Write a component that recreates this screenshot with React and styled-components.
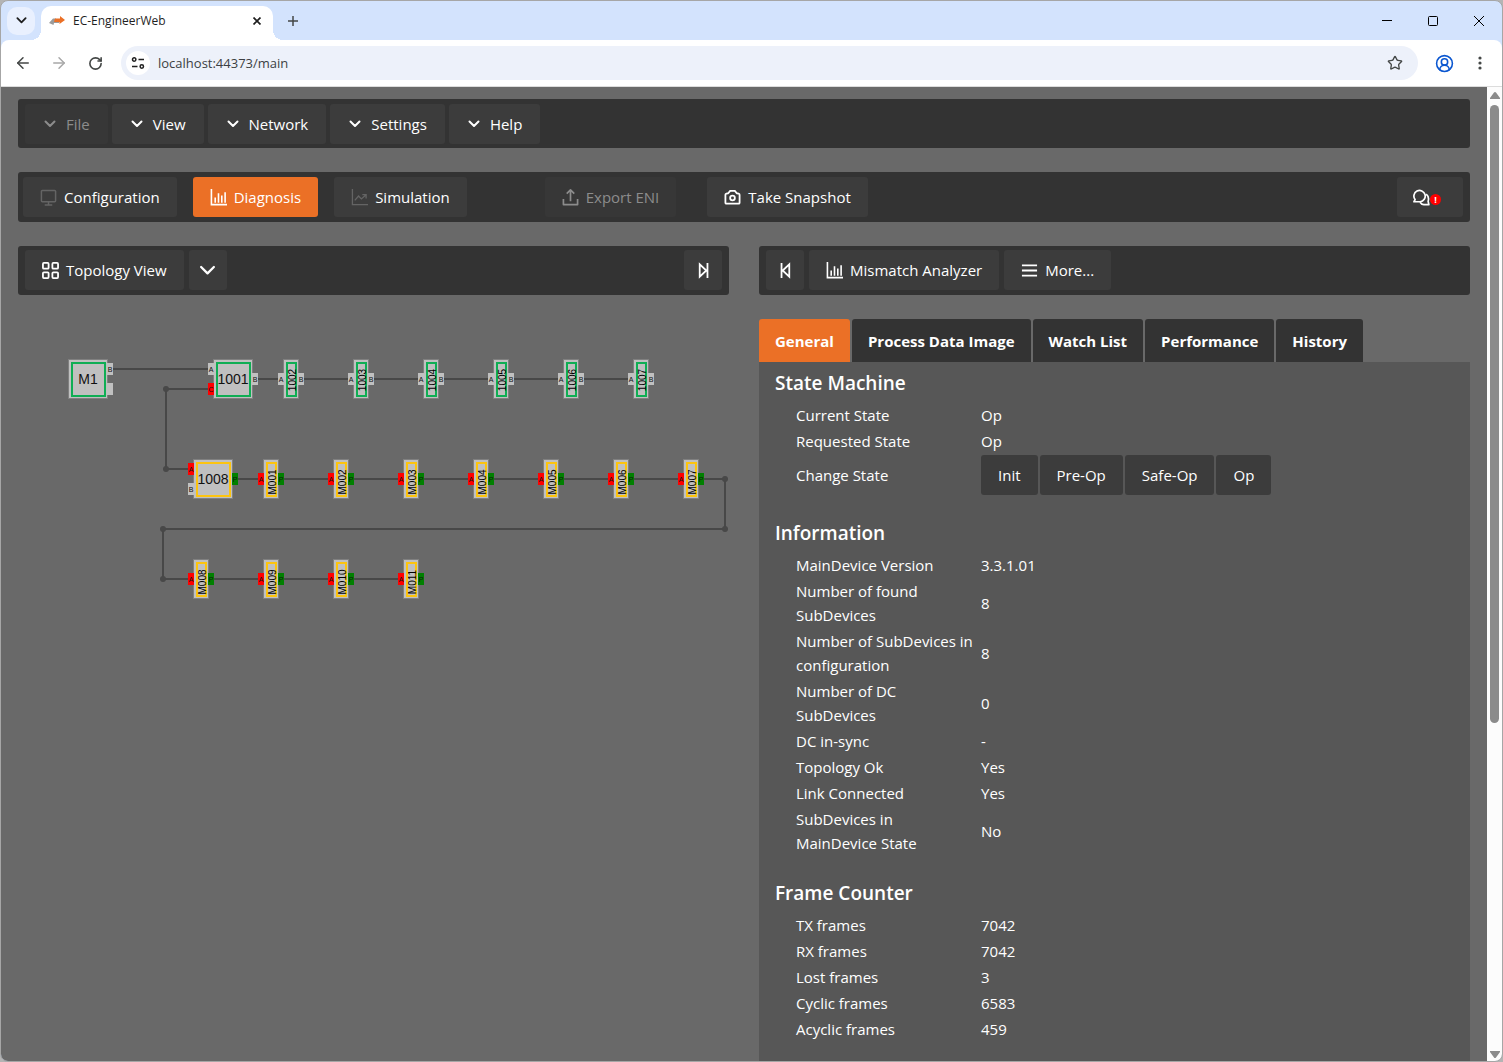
import React from "react";
import styled, { createGlobalStyle } from "styled-components";
import { ArrowLeft, ArrowRight, RotateCw, Star, CircleUserRound } from "lucide-react";

const GlobalStyle = createGlobalStyle`
  * {
    box-sizing: border-box;
  }
  body {
    margin: 0;
    background-color: #b4b4b4;
    font-family: "Open Sans", "Noto Sans", sans-serif;
  }
  button, input {
    font-family: inherit;
  }
`;

const Window = styled.div`
  height: 100vh;
  display: flex;
  flex-direction: column;
  border: 1px solid #a6a6a6;
  border-radius: 8px;
  overflow: hidden;
  background-color: #d3e3fd;
`;

/* browser frame */

const TitleBar = styled.div`
  height: 39px;
  flex-shrink: 0;
  display: flex;
  align-items: center;
  padding-left: 6px;
`;

const TabSearch = styled.button`
  width: 28px;
  height: 28px;
  display: flex;
  align-items: center;
  justify-content: center;
  padding: 0;
  border: none;
  border-radius: 10px;
  background-color: #e9f0fe;
  color: #1f1f1f;
`;

const BrowserTab = styled.div`
  position: relative;
  width: 232px;
  height: 34px;
  align-self: flex-end;
  display: flex;
  align-items: center;
  margin-left: 6px;
  padding: 0 10px 4px 8px;
  border-radius: 10px 10px 0 0;
  background-color: #fff;
  &::before, &::after {
    content: "";
    position: absolute;
    bottom: 0;
    width: 10px;
    height: 10px;
  }
  &::before {
    left: -10px;
    background: radial-gradient(circle at 0 0, transparent 10px, #fff 10px);
  }
  &::after {
    right: -10px;
    background: radial-gradient(circle at 100% 0, transparent 10px, #fff 10px);
  }
`;

const TabTitle = styled.span`
  flex: 1;
  margin-left: 8px;
  font-size: 12px;
  line-height: 16px;
  white-space: nowrap;
  color: #1f1f1f;
`;

const PlainButton = styled.button`
  width: ${(props) => props.$size}px;
  height: ${(props) => props.$size}px;
  display: flex;
  align-items: center;
  justify-content: center;
  flex-shrink: 0;
  padding: 0;
  border: none;
  background: none;
  color: ${(props) => props.$color || "#1f1f1f"};
`;

const Spacer = styled.div`
  flex: 1;
`;

const NewTab = styled.div`
  margin-left: 9px;
`;

const WindowControls = styled.div`
  display: flex;
  gap: 24px;
  padding-right: 12px;
`;

const AddressBar = styled.div`
  height: 47px;
  flex-shrink: 0;
  display: flex;
  align-items: center;
  padding: 0 10px;
  border-radius: 8px 8px 0 0;
  border-bottom: 1px solid #dcdcdc;
  background-color: #fff;
`;

const NavButtons = styled.div`
  display: flex;
  gap: 12px;
`;

const Omnibox = styled.div`
  flex: 1;
  height: 34px;
  display: flex;
  align-items: center;
  margin: 0 14px;
  padding: 0 12px 0 5px;
  border-radius: 17px;
  background-color: #edf1fa;
`;

const SiteInfo = styled.button`
  width: 24px;
  height: 24px;
  display: flex;
  align-items: center;
  justify-content: center;
  padding: 0;
  border: none;
  border-radius: 12px;
  background-color: #fff;
`;

const Url = styled.input`
  flex: 1;
  margin-left: 8px;
  padding: 0;
  border: none;
  outline: none;
  background: none;
  font-size: 13px;
  line-height: 20px;
  color: #3c3f43;
`;

const BrowserActions = styled.div`
  display: flex;
  gap: 12px;
`;

const Viewport = styled.div`
  flex: 1;
  min-height: 0;
  display: flex;
  background-color: #696969;
`;

const Scrollbar = styled.div`
  width: 15px;
  display: flex;
  flex-direction: column;
  align-items: center;
  gap: 6px;
  padding: 5px 0 3px;
  background-color: #fcfcfc;
`;

const Track = styled.div`
  flex: 1;
`;

const Thumb = styled.div`
  width: 9px;
  height: 64%;
  border-radius: 5px;
  background-color: #8b8b8b;
`;

/* application */

const Page = styled.main`
  flex: 1;
  min-width: 0;
  display: flex;
  flex-direction: column;
  gap: 24px;
  padding: 12px 17px 0;
  overflow: hidden;
  color: #fff;
`;

const Bar = styled.div`
  display: flex;
  align-items: center;
  gap: 4px;
  padding: 5px 7px 4px;
  border-radius: 3px;
  background-color: #333;
`;

const ModeBar = styled(Bar)`
  gap: 16px;
  padding: 5px 7px 5px 5px;
`;

const ViewBar = styled(Bar)`
  gap: 5px;
  padding: 4px 7px 5px;
`;

const Button = styled.button`
  height: 40px;
  display: flex;
  align-items: center;
  justify-content: center;
  gap: 7px;
  flex-shrink: 0;
  padding: 0 17px;
  border: none;
  border-radius: 3px;
  background-color: ${(props) => (props.$active ? "#eb7026" : "#3c3c3c")};
  color: #fff;
  font-size: 15px;
  line-height: 24px;
  white-space: nowrap;
  &:disabled {
    background-color: #373737;
    color: #8c8c8c;
  }
`;

const MenuButton = styled(Button)`
  gap: 10px;
  padding: 0 18px 0 19px;
`;

const IconButton = styled(Button)`
  width: 38px;
  padding: 0;
`;

const ExportGroup = styled.div`
  display: flex;
  gap: 31px;
  margin-left: 62px;
`;

const MessageButton = styled(Button)`
  width: 66px;
  gap: 0;
  padding: 0 6px 0 0;
`;

const Badge = styled.span`
  width: 11px;
  height: 11px;
  margin-top: 4px;
  border-radius: 6px;
  background-color: #f00;
  font-size: 9px;
  font-weight: 700;
  line-height: 11px;
  text-align: center;
`;

const Columns = styled.div`
  flex: 1;
  min-height: 0;
  display: grid;
  grid-template-columns: 1fr 1fr;
  gap: 30px;
`;

const Column = styled.section`
  min-width: 0;
  display: flex;
  flex-direction: column;
  gap: 24px;
`;

const Canvas = styled.svg`
  width: 100%;
  height: 320px;
  font-family: "Liberation Sans", Arial, sans-serif;
`;

const Details = styled.div`
  flex: 1;
  display: flex;
  flex-direction: column;
`;

const Tabs = styled.div`
  display: flex;
  gap: 2px;
`;

const Tab = styled.button`
  height: 43px;
  padding: 0 16px;
  border: none;
  border-radius: 3px 3px 0 0;
  background-color: ${(props) => (props.$active ? "#eb7026" : "#333")};
  color: #fff;
  font-size: 15px;
  font-weight: 700;
  line-height: 24px;
  white-space: nowrap;
`;

const Panel = styled.div`
  flex: 1;
  padding: 6px 16px;
  background-color: #575757;
`;

const Heading = styled.h2`
  margin: 0 0 3px;
  font-size: 19px;
  font-weight: 600;
  line-height: 30px;
`;

const Table = styled.table`
  margin: 0 0 21px 19px;
  border-spacing: 2px;
  font-size: 15px;
  line-height: 24px;
`;

const Label = styled.th`
  width: 183px;
  padding: 0 4px 0 0;
  font-weight: 400;
  text-align: left;
`;

const Value = styled.td`
  padding: 0;
`;

const StateButtons = styled.div`
  display: flex;
  gap: 2px;
`;

/* icons */

const Icon = ({ size = 17, width = 2, color = "currentColor", children }) => (
  <svg width={size} height={size} viewBox="0 0 18 18" fill="none" stroke={color} strokeWidth={width} aria-hidden="true">
    {children}
  </svg>
);

const ChevronIcon = ({ size = 12, width = 2 }) => (
  <svg width={size} height={size} viewBox="0 0 12 12" fill="none" stroke="currentColor" strokeWidth={width} strokeLinecap="round" strokeLinejoin="round" aria-hidden="true">
    <path d="M1.5 3.5 6 8l4.500-4.500" />
  </svg>
);

const MonitorIcon = () => (
  <Icon width={1.6} color="#646464">
    <rect x="1.500" y="1.500" width="15" height="12" rx="1" />
    <path d="M9 13.500v3M5 17h8" />
  </Icon>
);

const ChartIcon = () => (
  <Icon width={1.7}>
    <path d="M1.500 0v16.500H18M5.500 9V14.500M9 4.500V14.500M12.500 7V14.500M16 3.500V14.500" />
  </Icon>
);

const TrendIcon = () => (
  <Icon width={1.4} color="#646464">
    <path d="M1.500 0v16.500H18M4 12l4-4.500 3 3 5-4.500M12 6h4v4" />
  </Icon>
);

const UploadIcon = () => (
  <Icon width={1.8}>
    <path d="M9 13V1.500M5 5l4-4 4 4M1.500 10.500v6h15v-6" strokeLinejoin="round" />
  </Icon>
);

const CameraIcon = () => (
  <Icon width={1.9}>
    <path d="M1.500 6q0-1 1-1.200L4.500 4.500 6.500 2h5l2 2.500 2 .3q1 .2 1 1.200v8.500q0 1-1 1h-13q-1 0-1-1z" strokeLinejoin="round" />
    <circle cx="9" cy="9.500" r="2.500" />
  </Icon>
);

const GridIcon = () => (
  <Icon width={1.9}>
    <rect x="1" y="1" width="6" height="6" rx="1" />
    <rect x="11" y="1" width="6" height="6" rx="1" />
    <rect x="1" y="11" width="6" height="6" rx="1" />
    <rect x="11" y="11" width="6" height="6" rx="1" />
  </Icon>
);

const LastIcon = () => (
  <Icon width={1.9}>
    <path d="M5 2.500v13L12 9zM13.200 1v16" />
  </Icon>
);

const FirstIcon = () => (
  <Icon width={1.9}>
    <path d="M13 2.500v13L6 9zM4.800 1v16" />
  </Icon>
);

const ListIcon = () => (
  <Icon width={1.9}>
    <path d="M1 3.500h16M1 9h16M1 14.500h16" />
  </Icon>
);

const ChatIcon = () => (
  <Icon width={1.8}>
    <path d="M1 13.500l1.200-2.300A6 6 0 1 1 7.500 13.500z" strokeLinejoin="round" />
    <path d="M14 5.500q3.500 3 2 7.500l.8 3.500H11.500q-2.500 0-4-2.500" strokeLinejoin="round" />
  </Icon>
);

const LogoIcon = () => (
  <svg width="16" height="16" viewBox="0 0 16 16" aria-hidden="true">
    <path d="M0 10l4-4.500h3v2h4l-1 2.500H5l-.5 2z" fill="#9b9b9b" />
    <path d="M6 5.500h5V3l5 4-5.500 4V9H5z" fill="#eb7026" />
  </svg>
);

const TuneIcon = () => (
  <svg width="14" height="14" viewBox="0 0 14 14" fill="none" stroke="#1f1f1f" strokeWidth="1.500" aria-hidden="true">
    <circle cx="3.200" cy="3.500" r="1.700" />
    <path d="M7.500 3.500H13M1 10.500h5.500" />
    <circle cx="10.800" cy="10.500" r="1.700" />
  </svg>
);

/* topology diagram */

const GREEN = "#0fae54";
const YELLOW = "#fcc410";

const portColors = { grey: "#c0c0c0", red: "#ff0000", green: "#008000" };

const leftPort = (name, color, dy = 0) => ({ side: "left", name, color, dy });
const rightPort = (name, color, dy = 0) => ({ side: "right", name, color, dy });

const nodes = [
  { name: "M1", x: 70, y: 60, wide: true, ring: GREEN, ports: [rightPort("B", "grey", -10), rightPort("", "grey", 10)] },
  { name: "1001", x: 215, y: 60, wide: true, ring: GREEN, ports: [leftPort("A", "grey", -10), leftPort("C", "red", 10), rightPort("B", "grey")] },
  ...["1002", "1003", "1004", "1005", "1006", "1007"].map((name, i) => ({
    name, x: 273 + i * 70, y: 60, ring: GREEN, ports: [leftPort("A", "grey"), rightPort("B", "grey")],
  })),
  { name: "1008", x: 195, y: 160, wide: true, ring: YELLOW, ports: [leftPort("A", "red", -10), leftPort("B", "grey", 10), rightPort("P", "green")] },
  ...["M001", "M002", "M003", "M004", "M005", "M006", "M007"].map((name, i) => ({
    name, x: 253 + i * 70, y: 160, ring: YELLOW, ports: [leftPort("A", "red"), rightPort("P", "green")],
  })),
  ...["M008", "M009", "M010", "M011"].map((name, i) => ({
    name, x: 183 + i * 70, y: 260, ring: YELLOW, ports: [leftPort("A", "red"), rightPort("P", "green")],
  })),
];

const joints = [[148, 70], [148, 150], [707, 160], [707, 210], [145, 210], [145, 260]];

const Node = ({ name, x, y, wide, ring, ports }) => {
  const w = wide ? 38 : 14;
  const left = x - w / 2;
  const top = y - 19;
  return (
    <g>
      <rect x={left - 1} y={top - 1} width={w + 2} height={40} fill="#808080" />
      <rect x={left} y={top} width={w} height="38" fill="#c0c0c0" />
      <rect x={left + 3} y={top + 3} width={w - 5} height="33" fill="none" stroke={ring} strokeWidth="2" />
      {ports.map((port) => {
        const px = port.side === "left" ? left - 6 : left + w;
        return (
          <g key={port.side + port.dy}>
            <rect x={px} y={y + port.dy - 6} width="6" height="12" fill={portColors[port.color]} />
            <text x={px + 3} y={y + port.dy + 3} fontSize="7" textAnchor="middle" fill="#111">{port.name}</text>
          </g>
        );
      })}
      {wide ? (
        <text x={x} y={y + 5} fontSize="14" textAnchor="middle" fill="#111">{name}</text>
      ) : (
        <text transform={`translate(${x + 5} ${y + (name[0] === "M" ? 3 : 1)}) rotate(-90)`} fontSize="10" textAnchor="middle" fill="#000">{name}</text>
      )}
    </g>
  );
};

const Topology = () => (
  <Canvas role="img" aria-label="Topology">
    <g fill="none" stroke="#484848" strokeWidth="2">
      <path d="M95 50H190M190 70H148V150H170M240 60H610" />
      <path d="M220 160H707V210H145V260H380" />
    </g>
    {joints.map(([x, y]) => <circle key={`${x}-${y}`} cx={x} cy={y} r="3" fill="#484848" />)}
    {nodes.map((node) => <Node key={node.name} {...node} />)}
  </Canvas>
);

const menus = ["View", "Network", "Settings", "Help"];
const tabs = ["General", "Process Data Image", "Watch List", "Performance", "History"];
const states = ["Init", "Pre-Op", "Safe-Op", "Op"];

const information = [
  ["MainDevice Version", "3.3.1.01"],
  ["Number of found SubDevices", "8"],
  ["Number of SubDevices in configuration", "8"],
  ["Number of DC SubDevices", "0"],
  ["DC in-sync", "-"],
  ["Topology Ok", "Yes"],
  ["Link Connected", "Yes"],
  ["SubDevices in MainDevice State", "No"],
];

const frames = [
  ["TX frames", "7042"],
  ["RX frames", "7042"],
  ["Lost frames", "3"],
  ["Cyclic frames", "6583"],
  ["Acyclic frames", "459"],
];

const Rows = ({ rows }) =>
  rows.map(([label, value]) => (
    <tr key={label}>
      <Label scope="row">{label}</Label>
      <Value>{value}</Value>
    </tr>
  ));

const BrowserFrame = () => (
  <>
    <TitleBar>
      <TabSearch aria-label="Search tabs"><ChevronIcon size={11} /></TabSearch>
      <BrowserTab>
        <LogoIcon />
        <TabTitle>EC-EngineerWeb</TabTitle>
        <PlainButton $size={12} aria-label="Close tab">
          <svg width="8" height="8" viewBox="0 0 8 8" stroke="currentColor" strokeWidth="1.700"><path d="M.5.500l7 7M7.500.500l-7 7" /></svg>
        </PlainButton>
      </BrowserTab>
      <NewTab>
        <PlainButton $size={22} $color="#444746" aria-label="New tab">
          <svg width="10" height="10" viewBox="0 0 10 10" stroke="currentColor" strokeWidth="1.500"><path d="M5 0v10M0 5h10" /></svg>
        </PlainButton>
      </NewTab>
      <Spacer />
      <WindowControls>
        <PlainButton $size={22} aria-label="Minimize">
          <svg width="10" height="10" viewBox="0 0 10 10" stroke="#000"><path d="M0 4.500h10" /></svg>
        </PlainButton>
        <PlainButton $size={22} aria-label="Maximize">
          <svg width="10" height="10" viewBox="0 0 10 10" fill="none" stroke="#000"><rect x=".5" y=".5" width="9" height="9" rx="1" /></svg>
        </PlainButton>
        <PlainButton $size={22} aria-label="Close">
          <svg width="10" height="10" viewBox="0 0 10 10" stroke="#000"><path d="M0 0l10 10M10 0L0 10" /></svg>
        </PlainButton>
      </WindowControls>
    </TitleBar>
    <AddressBar>
      <NavButtons>
        <PlainButton $size={24} $color="#444746" aria-label="Back"><ArrowLeft size={18} /></PlainButton>
        <PlainButton $size={24} $color="#a8a8a8" aria-label="Forward"><ArrowRight size={18} /></PlainButton>
        <PlainButton $size={24} $color="#444746" aria-label="Reload"><RotateCw size={15} strokeWidth={2.600} /></PlainButton>
      </NavButtons>
      <Omnibox>
        <SiteInfo aria-label="Site information"><TuneIcon /></SiteInfo>
        <Url aria-label="Address" defaultValue="localhost:44373/main" />
        <PlainButton $size={22} $color="#444746" aria-label="Bookmark"><Star size={16} /></PlainButton>
      </Omnibox>
      <BrowserActions>
        <PlainButton $size={24} $color="#0b57d0" aria-label="Profile"><CircleUserRound size={19} /></PlainButton>
        <PlainButton $size={24} $color="#444746" aria-label="Browser menu">
          <svg width="4" height="14" viewBox="0 0 4 14" fill="currentColor"><circle cx="2" cy="2" r="1.600" /><circle cx="2" cy="7" r="1.600" /><circle cx="2" cy="12" r="1.600" /></svg>
        </PlainButton>
      </BrowserActions>
    </AddressBar>
  </>
);

const App = () => {
  return (
    <Window>
      <GlobalStyle />
      <BrowserFrame />
      <Viewport>
        <Page>
          <Bar as="nav">
            <MenuButton disabled><ChevronIcon />File</MenuButton>
            {menus.map((menu) => (
              <MenuButton key={menu}><ChevronIcon />{menu}</MenuButton>
            ))}
          </Bar>
          <ModeBar>
            <Button><MonitorIcon />Configuration</Button>
            <Button $active><ChartIcon />Diagnosis</Button>
            <Button><TrendIcon />Simulation</Button>
            <ExportGroup>
              <Button disabled><UploadIcon />Export ENI</Button>
              <Button><CameraIcon />Take Snapshot</Button>
            </ExportGroup>
            <Spacer />
            <MessageButton aria-label="Messages"><ChatIcon /><Badge>!</Badge></MessageButton>
          </ModeBar>
          <Columns>
            <Column>
              <ViewBar>
                <Button><GridIcon />Topology View</Button>
                <IconButton aria-label="Choose view"><ChevronIcon size={17} width={1.600} /></IconButton>
                <Spacer />
                <IconButton aria-label="Expand left"><LastIcon /></IconButton>
              </ViewBar>
              <Topology />
            </Column>
            <Column>
              <ViewBar>
                <IconButton aria-label="Expand right"><FirstIcon /></IconButton>
                <Button><ChartIcon />Mismatch Analyzer</Button>
                <Button><ListIcon />More...</Button>
              </ViewBar>
              <Details>
                <Tabs role="tablist">
                  {tabs.map((tab, i) => (
                    <Tab key={tab} role="tab" aria-selected={i === 0} $active={i === 0}>{tab}</Tab>
                  ))}
                </Tabs>
                <Panel role="tabpanel">
                  <Heading>State Machine</Heading>
                  <Table>
                    <tbody>
                      <Rows rows={[["Current State", "Op"], ["Requested State", "Op"]]} />
                      <tr>
                        <Label scope="row">Change State</Label>
                        <Value>
                          <StateButtons>
                            {states.map((state) => <Button key={state}>{state}</Button>)}
                          </StateButtons>
                        </Value>
                      </tr>
                    </tbody>
                  </Table>
                  <Heading>Information</Heading>
                  <Table>
                    <tbody><Rows rows={information} /></tbody>
                  </Table>
                  <Heading>Frame Counter</Heading>
                  <Table>
                    <tbody><Rows rows={frames} /></tbody>
                  </Table>
                </Panel>
              </Details>
            </Column>
          </Columns>
        </Page>
        <Scrollbar aria-hidden="true">
          <svg width="10" height="7" viewBox="0 0 10 7"><path d="M5 0q.7 0 1 .5L10 6v1H0V6L4 .5q.3-.5 1-.5z" fill="#8b8b8b" /></svg>
          <Thumb />
          <Track />
          <svg width="10" height="7" viewBox="0 0 10 7"><path d="M5 7q.7 0 1-.5L10 1V0H0v1l4 5.500q.3.500 1 .5z" fill="#8b8b8b" /></svg>
        </Scrollbar>
      </Viewport>
    </Window>
  );
};

export default App;
